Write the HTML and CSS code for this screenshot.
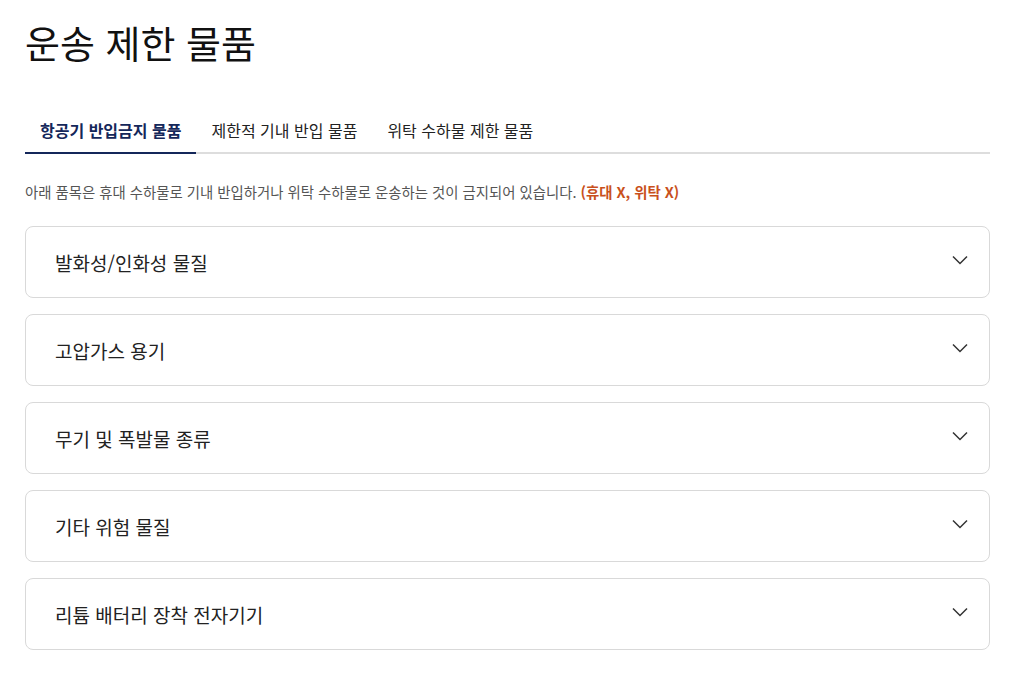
FILE: index.html
```html
<!DOCTYPE html>
<html lang="ko">
<head>
  <meta charset="UTF-8">
  <meta name="viewport" content="width=device-width, initial-scale=1.0">
  <title>운송 제한 물품</title>
  <link rel="stylesheet" href="styles.css">
</head>
<body>
  <div class="container">
    <h1 class="title">운송 제한 물품</h1>

    <!-- Tabs -->
    <div class="tabs">
      <button class="tab active">항공기 반입금지 물품</button>
      <button class="tab">제한적 기내 반입 물품</button>
      <button class="tab">위탁 수하물 제한 물품</button>
    </div>

    <p class="notice">아래 품목은 휴대 수하물로 기내 반입하거나 위탁 수하물로 운송하는 것이 금지되어 있습니다. <strong>(휴대 X, 위탁 X)</strong></p>

    <!-- Accordion list -->
    <div class="accordion">
      <div class="item">
        <span class="item-title">발화성/인화성 물질</span>
        <svg class="chevron" viewBox="0 0 16 10"><path d="M1 1.5l7 7 7-7"/></svg>
      </div>
      <div class="item">
        <span class="item-title">고압가스 용기</span>
        <svg class="chevron" viewBox="0 0 16 10"><path d="M1 1.5l7 7 7-7"/></svg>
      </div>
      <div class="item">
        <span class="item-title">무기 및 폭발물 종류</span>
        <svg class="chevron" viewBox="0 0 16 10"><path d="M1 1.5l7 7 7-7"/></svg>
      </div>
      <div class="item">
        <span class="item-title">기타 위험 물질</span>
        <svg class="chevron" viewBox="0 0 16 10"><path d="M1 1.5l7 7 7-7"/></svg>
      </div>
      <div class="item">
        <span class="item-title">리튬 배터리 장착 전자기기</span>
        <svg class="chevron" viewBox="0 0 16 10"><path d="M1 1.5l7 7 7-7"/></svg>
      </div>
    </div>
  </div>
</body>
</html>
```

FILE: styles.css
```css
body {
  margin: 0;
  font-family: "Noto Sans CJK KR", "Noto Sans", sans-serif;
  color: #111;
  background: #fff;
}

.container {
  padding: 14px 23px 20px 25px;
}

.title {
  font-size: 38px;
  font-weight: 400;
  line-height: 56px;
  margin: 0 0 44px;
}

.tabs {
  display: flex;
  border-bottom: 2px solid #ddd;
}

.tab {
  font-family: inherit;
  font-size: 16px;
  line-height: 22px;
  color: #222;
  background: none;
  border: none;
  padding: 5px 15px 11px;
  margin-bottom: -2px;
  border-bottom: 2px solid transparent;
  cursor: pointer;
}

.tab.active {
  font-weight: bold;
  color: #14275a;
  border-bottom-color: #14275a;
}

.notice {
  font-size: 14.4px;
  line-height: 21px;
  color: #555;
  margin: 27px 0 24px;
}

.notice strong {
  color: #c9501c;
}

.accordion {
  display: flex;
  flex-direction: column;
  gap: 16px;
}

.item {
  display: flex;
  align-items: center;
  justify-content: space-between;
  height: 72px;
  box-sizing: border-box;
  border: 1px solid #d9d9d9;
  border-radius: 8px;
  padding: 0 21px 0 29px;
}

.item-title {
  font-size: 19px;
  color: #222;
}

.chevron {
  width: 16px;
  height: 10px;
  fill: none;
  stroke: #333;
  stroke-width: 1.5;
  margin-top: -4px;
}
```
